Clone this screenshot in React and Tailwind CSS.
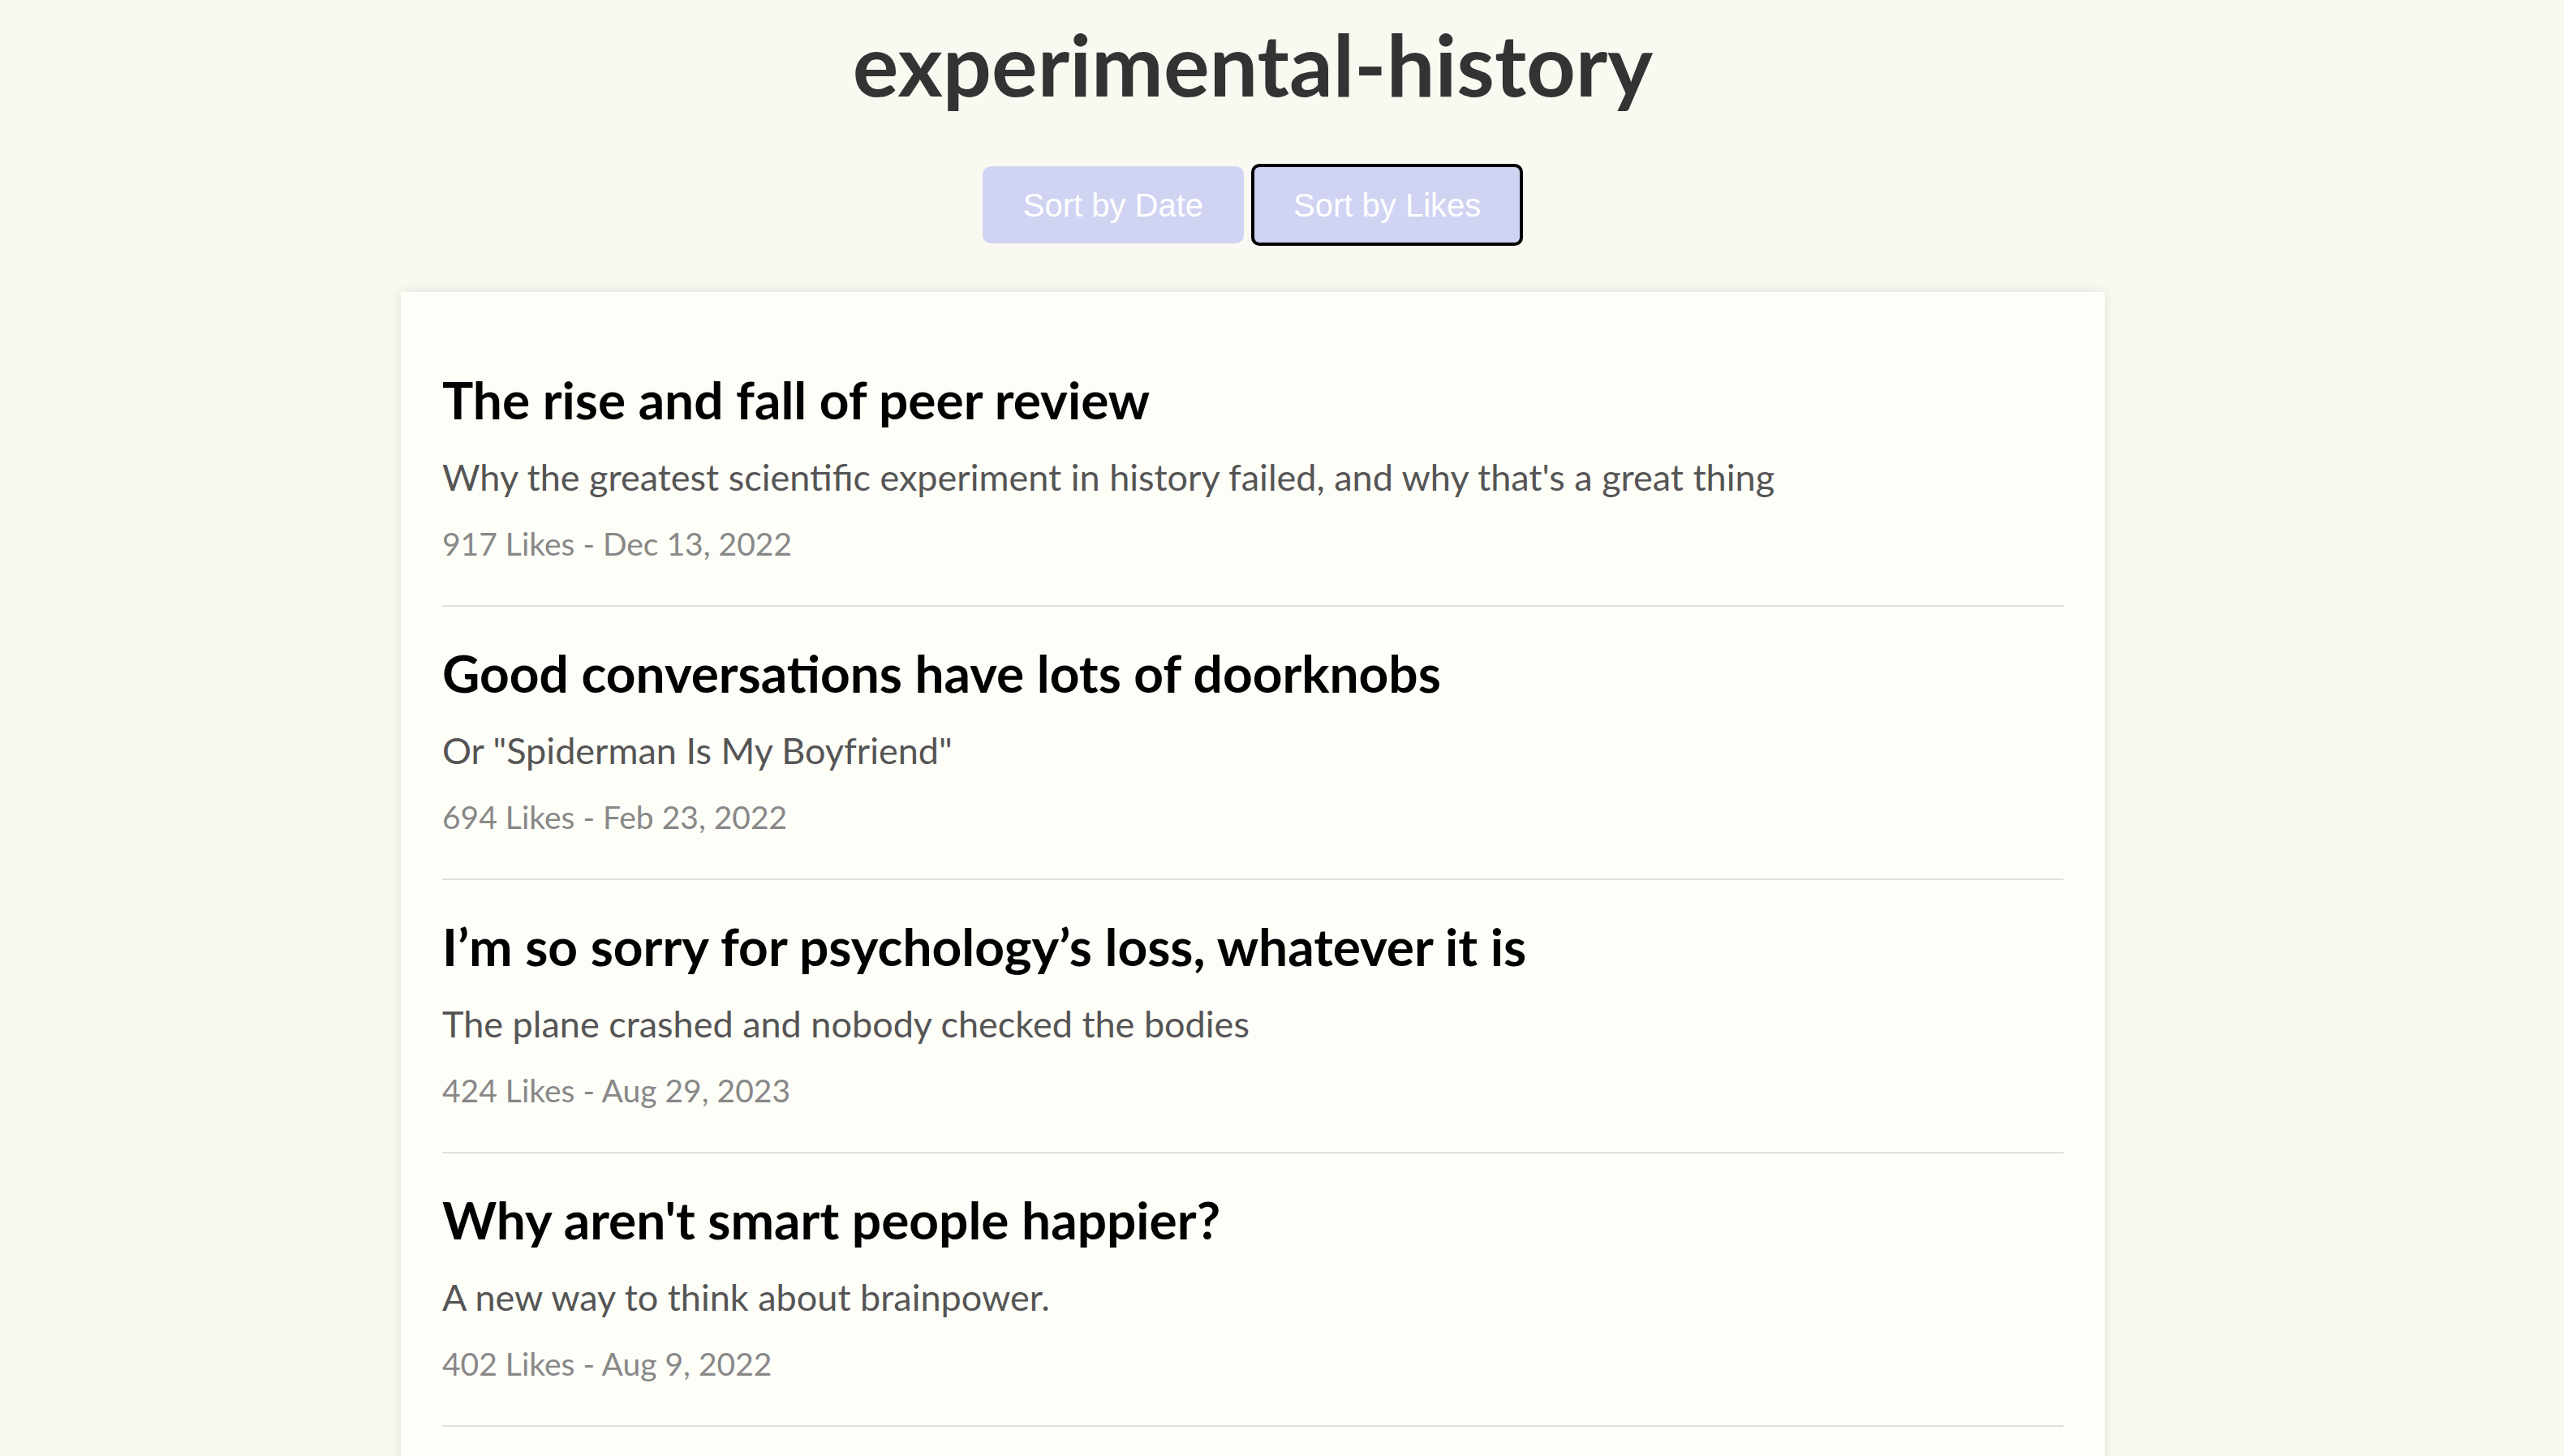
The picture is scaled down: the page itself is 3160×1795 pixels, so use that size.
import React, { useState } from 'react';

const posts = [
  {
    title: 'The rise and fall of peer review',
    subtitle: "Why the greatest scientific experiment in history failed, and why that's a great thing",
    likes: 917,
    date: 'Dec 13, 2022',
  },
  {
    title: 'Good conversations have lots of doorknobs',
    subtitle: 'Or "Spiderman Is My Boyfriend"',
    likes: 694,
    date: 'Feb 23, 2022',
  },
  {
    title: 'I\u2019m so sorry for psychology\u2019s loss, whatever it is',
    subtitle: 'The plane crashed and nobody checked the bodies',
    likes: 424,
    date: 'Aug 29, 2023',
  },
  {
    title: "Why aren't smart people happier?",
    subtitle: 'A new way to think about brainpower.',
    likes: 402,
    date: 'Aug 9, 2022',
  },
];

function PostItem({ post }) {
  return (
    <div className="pt-[46px] pb-[51px] border-b-2 border-[#e0e0dc]">
      <h2 className="text-[64px] leading-[72px] font-bold text-black">{post.title}</h2>
      <p className="mt-[31px] text-[45px] leading-[56px] text-[#555555]">{post.subtitle}</p>
      <p className="mt-[29px] text-[39px] leading-[50px] text-[#888888]">
        {post.likes} Likes - {post.date}
      </p>
    </div>
  );
}

const activeBtn =
  'h-[101px] px-[48px] rounded-[10px] bg-[#d0d3f2] text-white text-[40px] border-4 border-black';
const idleBtn =
  'h-[95px] px-[48px] rounded-[10px] bg-[#d0d3f2] text-white text-[40px] border-2 border-[#d0d3f2]';

export default function App() {
  const [sortBy, setSortBy] = useState('likes');

  return (
    <div
      className="min-h-screen bg-[#f9f9f2] overflow-hidden"
      style={{ fontFamily: 'Lato, "Noto Sans", sans-serif' }}
    >
      <div className="w-[3088px] flex flex-col items-center">
        {/* Header */}
        <h1 className="mt-[15px] text-[106px] leading-[127px] font-bold text-[#333333]">
          experimental-history
        </h1>

        {/* Sort buttons */}
        <div
          className="mt-[60px] h-[101px] flex items-center gap-[9px]"
          style={{ fontFamily: '"Liberation Sans", Arial, sans-serif' }}
        >
          <button
            className={sortBy === 'date' ? activeBtn : idleBtn}
            onClick={() => setSortBy('date')}
          >
            Sort by Date
          </button>
          <button
            className={sortBy === 'likes' ? activeBtn : idleBtn}
            onClick={() => setSortBy('likes')}
          >
            Sort by Likes
          </button>
        </div>

        {/* Post list */}
        <div className="mt-[57px] w-[2100px] bg-[#fefef8] px-[51px] pt-[51px] pb-[80px] shadow-[0_0_14px_rgba(0,0,0,0.10)]">
          {posts.map((post) => (
            <PostItem key={post.title} post={post} />
          ))}
        </div>
      </div>
    </div>
  );
}
